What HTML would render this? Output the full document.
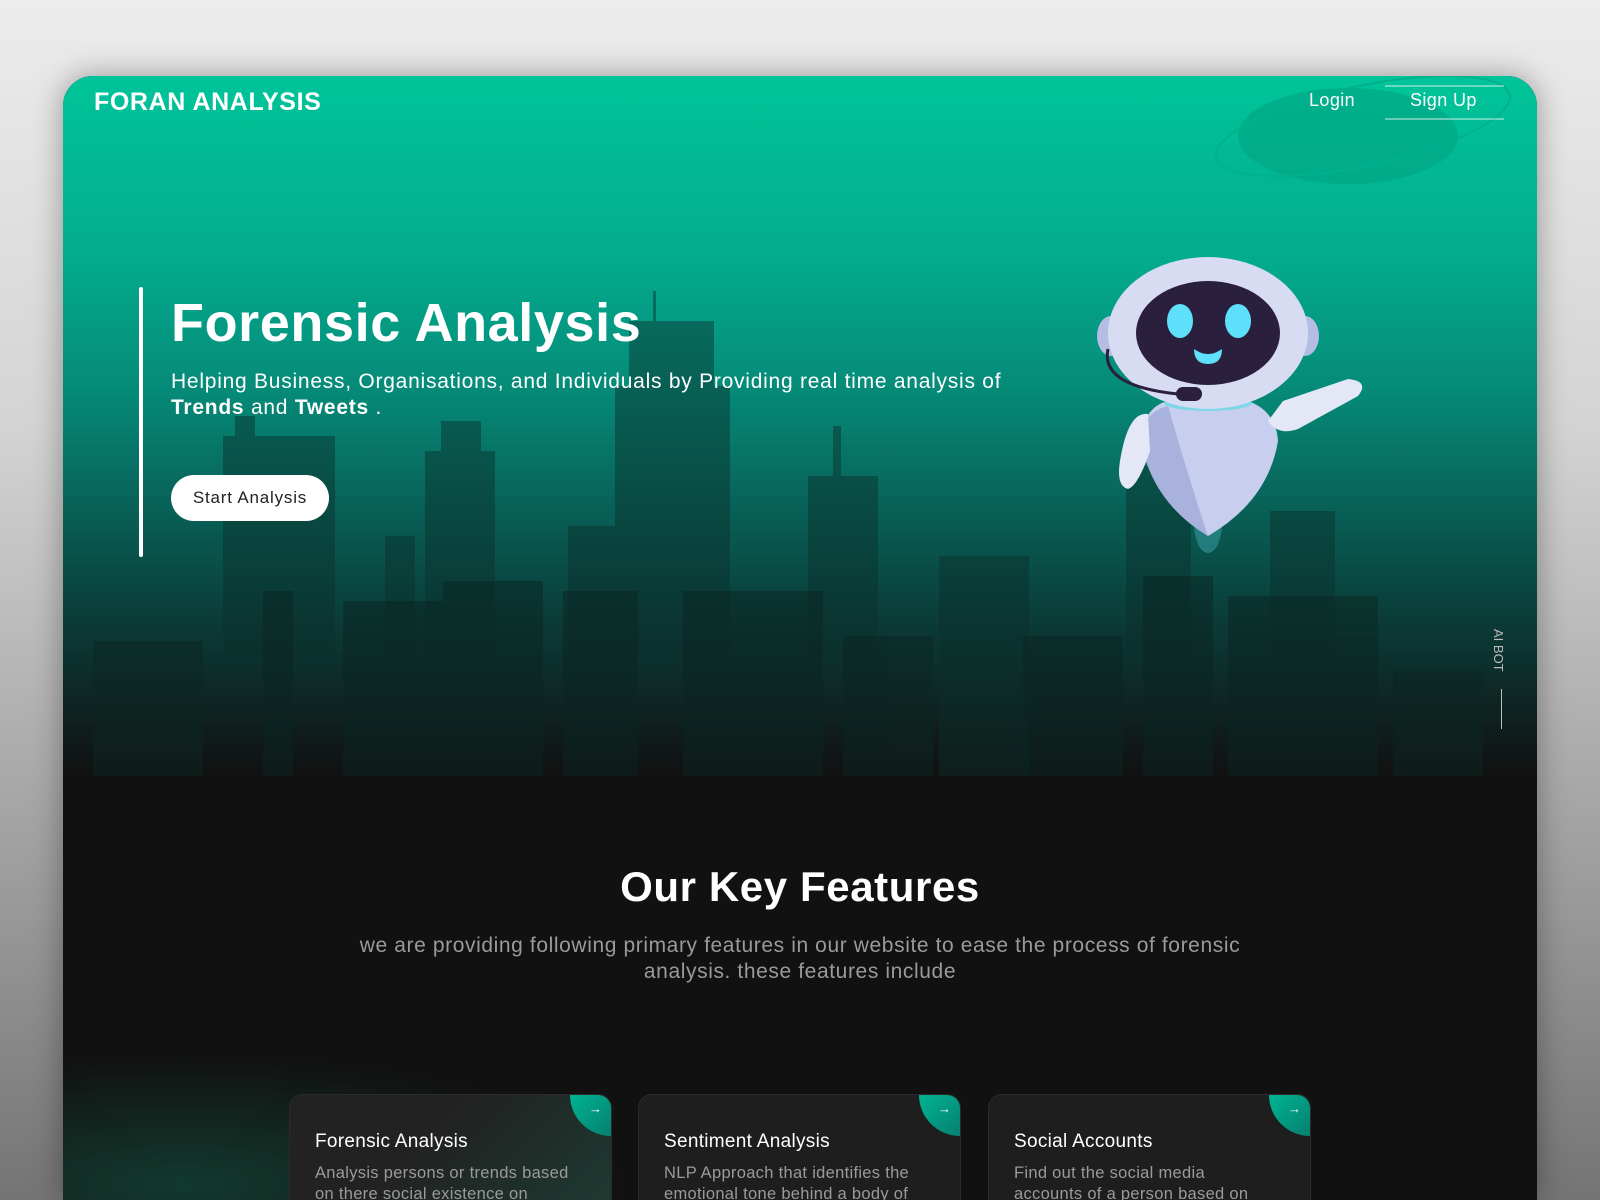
<!DOCTYPE html>
<html><head><meta charset="utf-8"><style>
*{margin:0;padding:0;box-sizing:border-box}
html,body{width:1600px;height:1200px;overflow:hidden}
body{background:linear-gradient(180deg,#ececec 0%,#d4d4d4 35%,#9a9a9a 75%,#747474 100%);font-family:"Liberation Sans",sans-serif;position:relative}
.page{position:absolute;left:63px;top:76px;width:1474px;height:1124px;border-radius:30px 30px 0 0;overflow:hidden;background:#111111;box-shadow:0 0 30px rgba(0,0,0,.35)}
.hero{position:absolute;left:0;top:0;width:100%;height:700px;background:linear-gradient(180deg,#00c49a 0%,#03ad8f 25%,#068a78 45%,#08655b 60%,#0b3b37 78%,#111 100%)}
.logo{position:absolute;left:31px;top:12px;color:#fff;font-weight:bold;font-size:25px;letter-spacing:0.6px}
.nav{position:absolute;top:14px;color:#fff;font-size:18px;letter-spacing:.4px}
.su-line{position:absolute;left:1322px;width:119px;height:2px;background:rgba(255,255,255,.4)}
.vline{position:absolute;left:76px;top:211px;width:4px;height:270px;background:#fff;border-radius:2px}
h1{position:absolute;left:108px;top:216px;color:#fff;font-size:54px;font-weight:bold;letter-spacing:0.6px}
.sub{position:absolute;left:108px;top:293px;color:#fff;font-size:21px;line-height:26px;width:990px;letter-spacing:.75px}
.btn{position:absolute;left:108px;top:399px;width:158px;height:46px;background:#fff;border-radius:23px;color:#222;font-size:17px;text-align:center;line-height:46px;letter-spacing:.8px}
.aibot{position:absolute;left:1428px;top:553px;color:#bbb;font-size:13px;writing-mode:vertical-rl}
.ailine{position:absolute;left:1438px;top:613px;width:1px;height:40px;background:#bbb}
h2{position:absolute;left:0;width:100%;top:787px;text-align:center;color:#fff;font-size:42px;font-weight:bold;letter-spacing:.6px}
.desc{position:absolute;left:260px;width:954px;top:857px;text-align:center;color:#9a9a9a;font-size:21px;line-height:26px;letter-spacing:.6px}
.glow{position:absolute;left:0;top:968px;width:600px;height:156px;background:radial-gradient(ellipse at 20% 90%,rgba(20,90,70,.55),rgba(17,17,17,0) 65%)}
.card{position:absolute;top:1018px;width:323px;height:120px;border-radius:14px;background:#1e1e1e;border:1px solid #2b2b2b;overflow:hidden}
.card .c{position:absolute;right:0;top:0;width:41px;height:41px;background:linear-gradient(135deg,#00b394,#06806f);border-bottom-left-radius:41px;color:#fff;font-size:13px;text-align:right;padding:6px 9px 0 0}
.card .t{position:absolute;left:25px;top:36px;color:#fff;font-size:19px;letter-spacing:.3px}
.card .d{position:absolute;left:25px;top:68px;color:#9a9a9a;font-size:16.5px;line-height:21px;width:268px;letter-spacing:.3px}
</style></head><body>
<div class="page">
<div class="hero">
<svg style="position:absolute;left:0;top:0" width="1474" height="700">
<g fill="#0b2e2b" opacity="0.45">
<rect x="160" y="360" width="112" height="220"/><rect x="172" y="340" width="20" height="30"/>
<rect x="362" y="375" width="70" height="200"/><rect x="378" y="345" width="40" height="40"/>
<rect x="552" y="310" width="115" height="270"/><rect x="566" y="245" width="85" height="70"/><rect x="590" y="215" width="3" height="40"/>
<rect x="505" y="450" width="110" height="130"/>
<rect x="745" y="400" width="70" height="180"/><rect x="770" y="350" width="8" height="55"/>
<rect x="1063" y="390" width="65" height="190"/><rect x="1207" y="435" width="65" height="145"/>
<rect x="876" y="480" width="90" height="220"/><rect x="322" y="460" width="30" height="120"/>
</g>
<g fill="#0b2522" opacity="0.5">
<rect x="30" y="565" width="110" height="140"/><rect x="200" y="515" width="30" height="190"/>
<rect x="280" y="525" width="140" height="180"/><rect x="380" y="505" width="100" height="200"/>
<rect x="500" y="515" width="75" height="190"/><rect x="620" y="515" width="140" height="190"/>
<rect x="780" y="560" width="90" height="145"/><rect x="960" y="560" width="100" height="145"/>
<rect x="1080" y="500" width="70" height="205"/><rect x="1165" y="520" width="150" height="185"/>
<rect x="1330" y="595" width="90" height="110"/>
</g>
<ellipse cx="1285" cy="60" rx="110" ry="48" fill="#00a382" opacity=".6"/>
<ellipse cx="1300" cy="50" rx="150" ry="40" fill="none" stroke="#00b08e" stroke-width="2" transform="rotate(-12 1300 50)"/>
<g transform="translate(1145,185)">
<ellipse cx="0" cy="262" rx="14" ry="30" fill="#5fd8e8" opacity=".3"/>
<path d="M-68 175 Q-62 145 -40 140 L40 140 Q68 150 70 180 Q60 240 0 275 Q-58 240 -68 175Z" fill="#c8cfee"/>
<path d="M-40 145 Q-20 215 0 275 Q-58 240 -68 175 Q-62 150 -40 145Z" fill="#a8b2dc"/>
<path d="M-60 153 Q-80 150 -88 200 Q-92 225 -80 228 Q-70 225 -58 190Z" fill="#e4e7f6"/>
<path d="M60 160 Q70 175 90 168 L150 135 Q162 120 140 118 L75 140Z" fill="#e4e7f6"/>
<ellipse cx="0" cy="142" rx="44" ry="8" fill="#5fd8e8" opacity=".7"/>
<ellipse cx="-97" cy="75" rx="14" ry="20" fill="#b6bde2"/><ellipse cx="97" cy="75" rx="14" ry="20" fill="#b6bde2"/>
<ellipse cx="0" cy="72" rx="100" ry="76" fill="#d7dcf2"/>
<ellipse cx="0" cy="72" rx="72" ry="52" fill="#2a1f3d"/>
<ellipse cx="-28" cy="60" rx="13" ry="17" fill="#5fe0fa"/><ellipse cx="30" cy="60" rx="13" ry="17" fill="#5fe0fa"/>
<path d="M-14 88 Q0 98 14 88 Q14 103 0 103 Q-14 103 -14 88Z" fill="#5fe0fa"/>
<path d="M-100 88 Q-108 125 -30 133" stroke="#2a1f3d" stroke-width="3" fill="none"/>
<rect x="-32" y="126" width="26" height="14" rx="7" fill="#2a1f3d"/>
</g>
</svg>
<div class="logo">FORAN ANALYSIS</div>
<div class="nav" style="left:1246px">Login</div>
<div class="nav" style="left:1347px">Sign Up</div>
<div class="su-line" style="top:9px"></div><div class="su-line" style="top:42px"></div>
<div class="vline"></div>
<h1>Forensic Analysis</h1>
<div class="sub">Helping Business, Organisations, and Individuals by Providing real time analysis of<br><b>Trends</b> and <b>Tweets</b> .</div>
<div class="btn">Start Analysis</div>
<div class="aibot">AI BOT</div><div class="ailine"></div>
</div>
<h2>Our Key Features</h2>
<div class="desc">we are providing following primary features in our website to ease the process of forensic analysis. these features include</div>
<div class="glow"></div>
<div class="card" style="left:226px;background:linear-gradient(135deg,#222 40%,#1d3a32)"><div class="c">→</div><div class="t">Forensic Analysis</div><div class="d">Analysis persons or trends based on there social existence on</div></div>
<div class="card" style="left:575px"><div class="c">→</div><div class="t">Sentiment Analysis</div><div class="d">NLP Approach that identifies the emotional tone behind a body of</div></div>
<div class="card" style="left:925px"><div class="c">→</div><div class="t">Social Accounts</div><div class="d" style="width:235px">Find out the social media accounts of a person based on</div></div>
</div>
</body></html>
